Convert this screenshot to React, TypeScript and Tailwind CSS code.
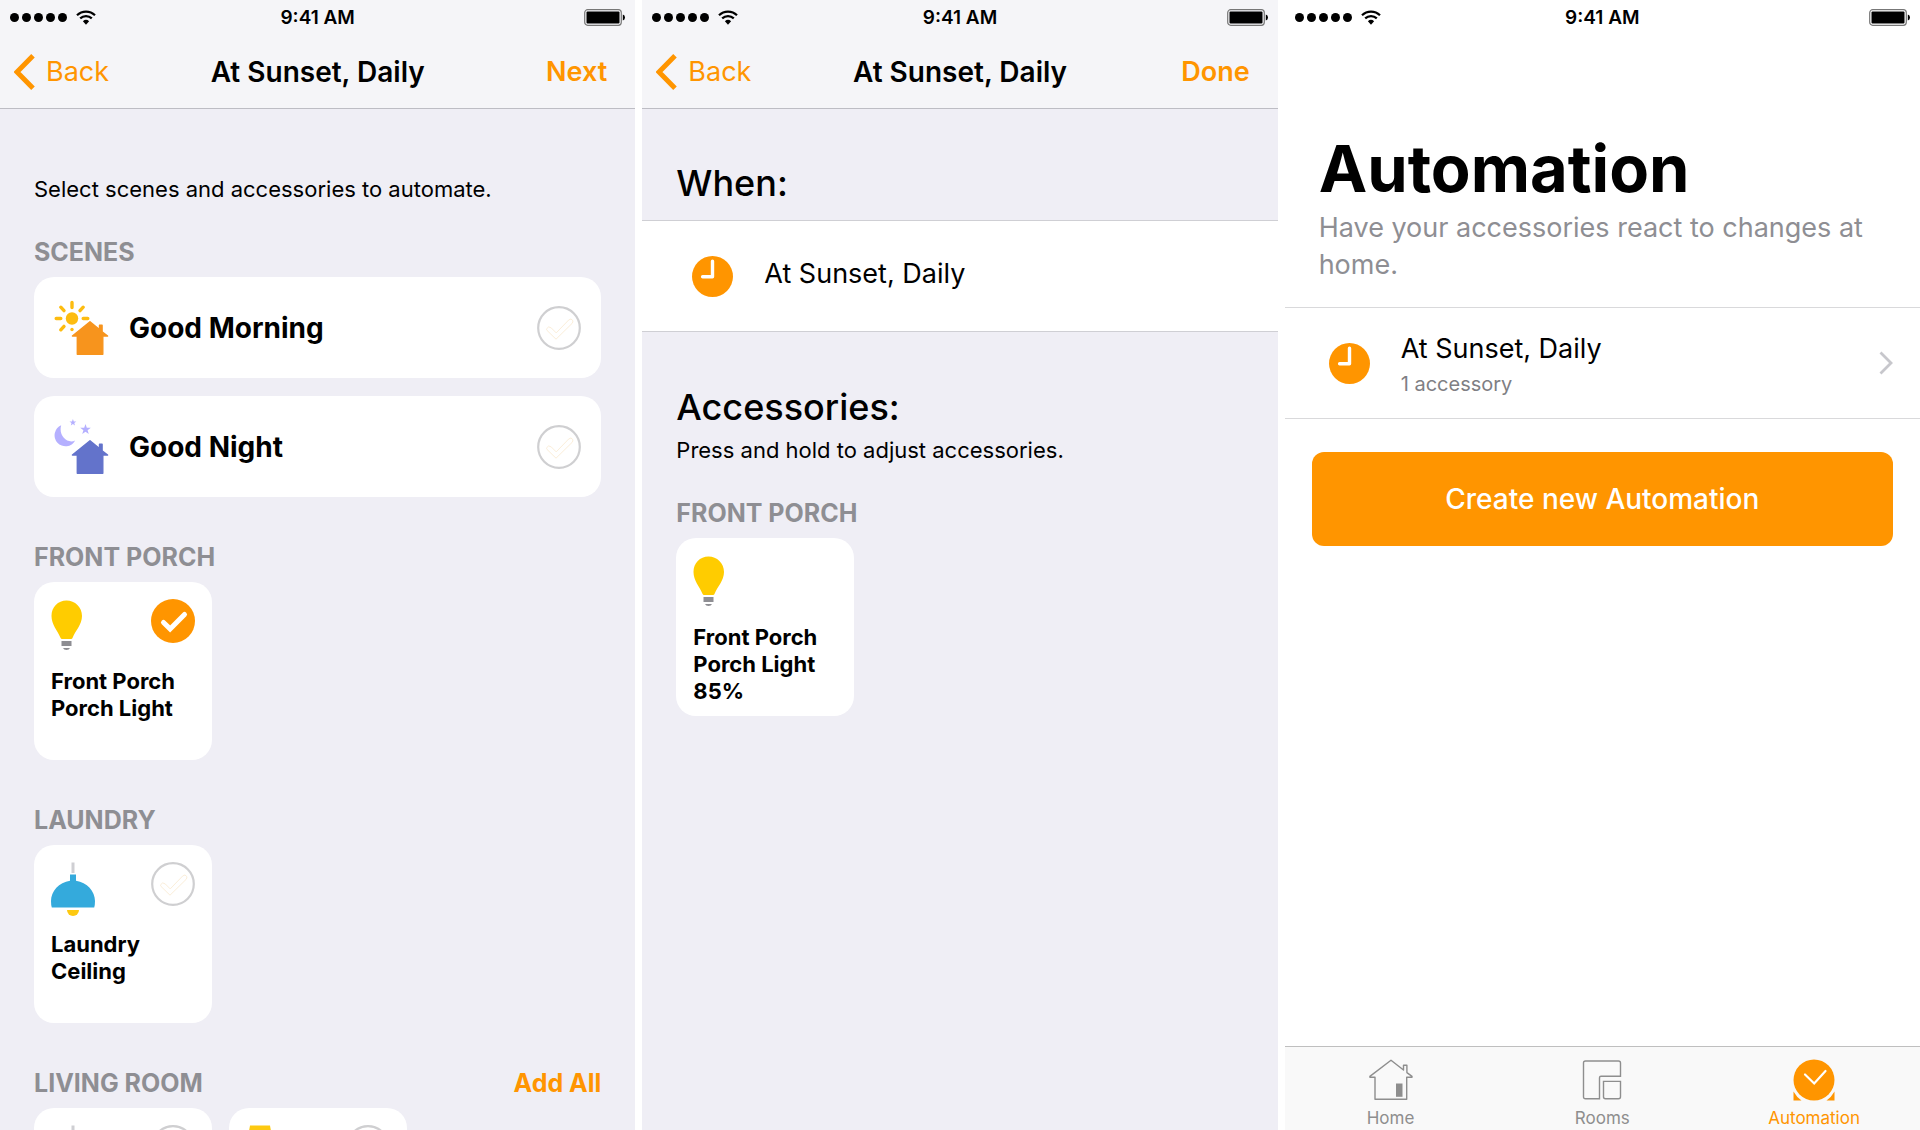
import { clsx } from "clsx";
import { useState } from "react";
import type { ReactNode } from "react";

type IconName = "bulb" | "pendant" | "lamp";

type Accessory = {
  id: string;
  icon: IconName;
  lines: string[];
  selected?: boolean;
};

type Room = {
  name: string;
  accessories: Accessory[];
  addAll?: boolean;
};

const rooms: Room[] = [
  {
    name: "FRONT PORCH",
    accessories: [
      { id: "porch-light", icon: "bulb", lines: ["Front Porch", "Porch Light"], selected: true },
    ],
  },
  {
    name: "LAUNDRY",
    accessories: [{ id: "laundry-ceiling", icon: "pendant", lines: ["Laundry", "Ceiling"] }],
  },
  {
    name: "LIVING ROOM",
    addAll: true,
    accessories: [
      { id: "living-ceiling", icon: "pendant", lines: [] },
      { id: "living-lamp", icon: "lamp", lines: [] },
    ],
  },
];

const HOUSE = "M36 21.7 45.5 29.6V25.2h2.600v6.600L53.600 36H48.800V54.200H23.300V36H18.400Z";

function SunHouseIcon() {
  return (
    <svg width="56" height="56" viewBox="0 0 56 56" aria-hidden="true">
      <circle cx="18" cy="18.5" r="6.2" fill="#fdbc10" />
      <path
        d="M18 2.5v5M2.2 18.5h4.6M29.2 18.5h4.6M6.8 7.2l3.2 3.4M29.2 7.2 26 10.6M6.8 29.8l3.2-3.4"
        stroke="#fdbc10"
        strokeWidth="3.4"
        strokeLinecap="round"
      />
      <circle cx="18" cy="29.5" r="1.7" fill="#fdbc10" />
      <path d={HOUSE} fill="#f7941d" stroke="#f7941d" strokeWidth="1.4" strokeLinejoin="round" />
    </svg>
  );
}

function MoonHouseIcon() {
  return (
    <svg width="56" height="56" viewBox="0 0 56 56" aria-hidden="true">
      <path d="M7.2 6.2A11 11 0 1 0 21.2 21.6C13 25.2 4.200 16.500 7.200 6.200Z" fill="#b5b0ff" />
      <path
        d="m18.900 0 .9 2.400h2.500l-2 1.600.7 2.500-2.100-1.500-2.100 1.500.7-2.500-2-1.600H18ZM31.500 5l1.300 3.800h4l-3.200 2.400 1.200 3.800-3.300-2.300-3.300 2.300 1.200-3.800-3.200-2.400h4Z"
        fill="#b5b0ff"
      />
      <path d={HOUSE} fill="#6373cb" stroke="#6373cb" strokeWidth="1.4" strokeLinejoin="round" />
    </svg>
  );
}

function AccessoryIcon({ name }: { name: IconName }) {
  if (name === "bulb") {
    return (
      <svg width="32" height="54" viewBox="0 0 32 54" aria-hidden="true">
        <path
          d="M15.500 1.500C24 1.500 31 8 31 17c0 8.500-6.500 14.500-9.500 22q-.4 1-1.400 1H11q-1 0-1.400-1C6.500 31.500.5 25.500.5 17 .5 8 7 1.500 15.500 1.500Z"
          fill="#ffcc00"
        />
        <path d="M10.500 42h10v5h-10ZM12 49h7q-.8 2-3.500 2T12 49Z" fill="#8e8e93" />
      </svg>
    );
  }
  if (name === "pendant") {
    return (
      <svg width="44" height="54" viewBox="0 0 44 54" aria-hidden="true">
        <path d="M20.500.5h3V11h-3Z" fill="#cfcfd3" />
        <path
          d="M19 12.500h6v6.200C36 20.500 44 29 44 39q0 4-.8 6.500H.8Q0 43 0 39C0 29 8 20.500 19 18.700Z"
          fill="#34aadc"
        />
        <path d="M16 48h12a6 6 0 0 1-12 0Z" fill="#fdc911" />
      </svg>
    );
  }
  return (
    <svg width="32" height="54" viewBox="0 0 32 54" aria-hidden="true">
      <path d="M4 .5h20L28 22H0Z" fill="#fdc911" />
      <path d="M12.500 24h3v26h7v3h-17v-3h7Z" fill="#8e8e93" />
    </svg>
  );
}

function CheckCircle({ checked }: { checked: boolean }) {
  if (checked) {
    return (
      <svg width="44" height="44" viewBox="0 0 44 44" className="shrink-0" aria-hidden="true">
        <circle cx="22" cy="22" r="22" fill="#ff9500" />
        <path
          d="m12.500 23.500 6.600 6.400L33.500 15.500"
          fill="none"
          stroke="#fff"
          strokeWidth="5"
          strokeLinecap="round"
        />
      </svg>
    );
  }
  return (
    <svg width="44" height="44" viewBox="0 0 44 44" className="shrink-0" fill="none" aria-hidden="true">
      <circle cx="22" cy="22" r="20.800" stroke="#cfcfd1" strokeWidth="2.200" />
      <path
        d="M9.600 22.800q1.800-3.400 4.600-.9l5 5 12.600-13q2.400-2 3.800.4.800 1.600-.6 3.200L19 33.200 10 24.400Q9.300 23.600 9.600 22.800Z"
        stroke="#fbeed9"
        strokeWidth="1"
      />
    </svg>
  );
}

function ClockIcon() {
  return (
    <svg width="41" height="41" viewBox="0 0 41 41" className="shrink-0" aria-hidden="true">
      <circle cx="20.500" cy="20.500" r="20.500" fill="#ff9500" />
      <path
        d="M20.500 5.200v15.600H10.600"
        fill="none"
        stroke="#fff"
        strokeWidth="3.400"
        strokeLinecap="round"
        strokeLinejoin="round"
      />
    </svg>
  );
}

function StatusBar() {
  return (
    <div className="grid h-[35px] grid-cols-3 items-center px-2.5">
      <div className="flex items-center gap-[9px]">
        <div className="flex gap-[3px]">
          {[0, 1, 2, 3, 4].map((dot) => (
            <span key={dot} className="size-[9px] rounded-full bg-black" />
          ))}
        </div>
        <svg width="20" height="15" viewBox="0 0 20 15" fill="none" aria-hidden="true">
          <path
            d="M1 5.200a12.900 12.900 0 0 1 18 0M4.200 8.400a8.300 8.300 0 0 1 11.600 0"
            stroke="#000"
            strokeWidth="2.200"
          />
          <path d="M6.900 11.300a4.500 4.500 0 0 1 6.200 0L10 14.800Z" fill="#000" />
        </svg>
      </div>
      <span className="text-center text-[19px] leading-6 font-semibold">9:41 AM</span>
      <svg width="41" height="17" viewBox="0 0 41 17" className="justify-self-end" aria-hidden="true">
        <rect x=".7" y=".7" width="36.600" height="15.600" rx="3" fill="none" stroke="#777" strokeWidth="1.200" />
        <rect x="2.500" y="2.500" width="33" height="12" rx="1" fill="#000" />
        <path d="M38.800 5.500q2.200.6 2.200 3t-2.200 3Z" fill="#000" />
      </svg>
    </div>
  );
}

function NavBar({ title, action }: { title: string; action: string }) {
  return (
    <header className="border-b border-[#bdbdc4] bg-[#f5f5f8]">
      <StatusBar />
      <div className="grid h-[73px] grid-cols-[1fr_auto_1fr] items-center px-3.5 leading-[34px]">
        <button type="button" className="flex items-center gap-[11px] text-[27px] text-[#ff9500]">
          <svg width="21" height="36" viewBox="0 0 21 36" fill="none" aria-hidden="true">
            <path d="M19 1.800 3 18l16 16.200" stroke="currentColor" strokeWidth="5" />
          </svg>
          Back
        </button>
        <h2 className="text-[28px] font-semibold">{title}</h2>
        <button
          type="button"
          className="justify-self-end pr-3.5 text-[27px] font-semibold text-[#ff9500]"
        >
          {action}
        </button>
      </div>
    </header>
  );
}

function SectionLabel({ children }: { children: ReactNode }) {
  return <h3 className="text-[25px] leading-[30px] font-bold text-[#8e8e93]">{children}</h3>;
}

function SceneCard({ icon, name }: { icon: ReactNode; name: string }) {
  const [checked, setChecked] = useState(false);
  return (
    <label className="flex h-[101px] cursor-pointer items-center gap-[19px] rounded-[20px] bg-white px-5">
      <input
        type="checkbox"
        className="sr-only"
        checked={checked}
        onChange={(e) => setChecked(e.target.checked)}
      />
      {icon}
      <span className="flex-1 text-[28px] leading-[34px] font-bold">{name}</span>
      <CheckCircle checked={checked} />
    </label>
  );
}

function CardBody({ icon, lines, corner }: { icon: IconName; lines: string[]; corner?: ReactNode }) {
  return (
    <>
      <span className="flex items-start justify-between">
        <AccessoryIcon name={icon} />
        {corner}
      </span>
      <span className="mt-[15px] block text-[22px] leading-[27px] font-bold">
        {lines.map((line) => (
          <span key={line} className="block whitespace-nowrap">
            {line}
          </span>
        ))}
      </span>
    </>
  );
}

function AccessoryCard({ accessory }: { accessory: Accessory }) {
  const [checked, setChecked] = useState(Boolean(accessory.selected));
  return (
    <label className="size-[178px] shrink-0 cursor-pointer rounded-[20px] bg-white p-[17px]">
      <input
        type="checkbox"
        className="sr-only"
        checked={checked}
        onChange={(e) => setChecked(e.target.checked)}
      />
      <CardBody
        icon={accessory.icon}
        lines={accessory.lines}
        corner={<CheckCircle checked={checked} />}
      />
    </label>
  );
}

function SelectScreen() {
  return (
    <section className="relative overflow-hidden bg-[#efeef5]">
      <NavBar title="At Sunset, Daily" action="Next" />
      <div className="px-[34px] pt-[65px]">
        <p className="text-[22px] leading-[30px]">Select scenes and accessories to automate.</p>
        <div className="mt-[33px] grid gap-2.5">
          <SectionLabel>SCENES</SectionLabel>
          <div className="grid gap-[18px]">
            <SceneCard icon={<SunHouseIcon />} name="Good Morning" />
            <SceneCard icon={<MoonHouseIcon />} name="Good Night" />
          </div>
        </div>
        {rooms.map((room) => (
          <div key={room.name} className="mt-[45px] grid gap-2.5">
            <div className="flex items-center justify-between">
              <SectionLabel>{room.name}</SectionLabel>
              {room.addAll ? (
                <button type="button" className="text-[25px] leading-[30px] font-bold text-[#ff9500]">
                  Add All
                </button>
              ) : null}
            </div>
            <div className="flex gap-[17px]">
              {room.accessories.map((accessory) => (
                <AccessoryCard key={accessory.id} accessory={accessory} />
              ))}
            </div>
          </div>
        ))}
      </div>
    </section>
  );
}

function ReviewScreen() {
  return (
    <section className="overflow-hidden bg-[#efeef5]">
      <NavBar title="At Sunset, Daily" action="Done" />
      <h3 className="px-[34px] pt-[52px] pb-[15px] text-[36px] leading-[44px] font-medium">When:</h3>
      <div className="flex h-28 items-center gap-[31px] border-y border-[#cfcfd4] bg-white pl-[50px]">
        <ClockIcon />
        <span className="pb-1 text-[27px] leading-[34px]">At Sunset, Daily</span>
      </div>
      <div className="px-[34px] pt-[53px]">
        <h3 className="text-[36px] leading-[44px] font-medium">Accessories:</h3>
        <p className="mt-1.5 text-[22px] leading-[30px]">Press and hold to adjust accessories.</p>
        <div className="mt-[33px] grid gap-2.5">
          <SectionLabel>FRONT PORCH</SectionLabel>
          <button
            type="button"
            className="flex size-[178px] flex-col rounded-[20px] bg-white p-[17px] text-left"
          >
            <CardBody icon="bulb" lines={["Front Porch", "Porch Light", "85%"]} />
          </button>
        </div>
      </div>
    </section>
  );
}

function HomeTabIcon() {
  return (
    <svg width="44" height="42" viewBox="0 0 44 42" fill="none" aria-hidden="true">
      <path
        d="M22 1.200 34.500 11V6.200h3.400v7.400L43 17.400v.9h-5.300v22H6v-22H.9v-.9Z"
        stroke="#8e8e8e"
        strokeWidth="1.400"
        strokeLinejoin="round"
      />
      <path d="M27 24.500h6.500v13.300H27Z" fill="#8e8e8e" />
    </svg>
  );
}

function RoomsTabIcon() {
  return (
    <svg width="40" height="42" viewBox="0 0 40 42" fill="none" stroke="#8e8e8e" strokeWidth="1.400" aria-hidden="true">
      <path d="M3.500 2H36.500q2 0 2 2V17.300H19q-1.500 0-1.500 1.500V39.700H3.500q-2 0-2-2V4q0-2 2-2Z" />
      <path d="M21.500 22.400h17v15.300q0 2-2 2H23.500q-2 0-2-2Z" />
    </svg>
  );
}

function AutomationTabIcon() {
  return (
    <svg width="42" height="42" viewBox="0 0 42 42" fill="none" aria-hidden="true">
      <circle cx="21" cy="21" r="20.500" fill="#ff9500" />
      <path d="M.5 32.500q3 5.500 8 9H.5ZM41.500 32.500q-3 5.500-8 9h8Z" fill="#ff9500" />
      <path
        d="m12 15.500 9.200 9L32.500 12"
        stroke="#fff"
        strokeWidth="2.200"
        strokeLinecap="round"
      />
    </svg>
  );
}

const tabs = [
  { label: "Home", icon: <HomeTabIcon />, active: false },
  { label: "Rooms", icon: <RoomsTabIcon />, active: false },
  { label: "Automation", icon: <AutomationTabIcon />, active: true },
];

function AutomationScreen() {
  return (
    <section className="flex flex-col overflow-hidden bg-white">
      <StatusBar />
      <div className="pt-[94px] pr-6 pb-6 pl-[34px]">
        <h1 className="text-[65px] leading-[80px] font-bold">Automation</h1>
        <p className="text-[27px] leading-[37px] text-[#8e8e93]">
          Have your accessories react to changes at home.
        </p>
      </div>
      <a
        href="#at-sunset"
        className="flex h-28 items-center border-y border-[#d9d9db] pr-[27px] pl-11"
      >
        <ClockIcon />
        <span className="ml-[31px] grid flex-1 gap-[5px]">
          <span className="text-[27px] leading-9">At Sunset, Daily</span>
          <span className="text-[20px] leading-6 text-[#7f7f84]">1 accessory</span>
        </span>
        <svg width="14" height="24" viewBox="0 0 14 24" fill="none" aria-hidden="true">
          <path d="m1.500 1.500 10.500 10.500L1.500 22.500" stroke="#c7c7cc" strokeWidth="2.800" />
        </svg>
      </a>
      <button
        type="button"
        className="mx-[27px] mt-[33px] h-[94px] rounded-xl bg-[#ff9500] text-[28px] leading-[34px] font-medium text-white"
      >
        Create new Automation
      </button>
      <nav
        className="mt-auto grid h-[84px] grid-cols-3 items-start border-t border-[#bfbfbf] bg-[#f9f9f9] pt-3"
        aria-label="Tabs"
      >
        {tabs.map((tab) => (
          <a
            key={tab.label}
            href={`#${tab.label.toLowerCase()}`}
            aria-current={tab.active ? "page" : undefined}
            className={clsx(
              "flex flex-col items-center gap-[7px] text-[17px] leading-5",
              tab.active ? "text-[#ff9500]" : "text-[#8e8e8e]",
            )}
          >
            {tab.icon}
            {tab.label}
          </a>
        ))}
      </nav>
    </section>
  );
}

export default function App() {
  return (
    <main className="grid h-screen grid-cols-3 grid-rows-1 gap-[7px] overflow-hidden bg-white font-['Inter',sans-serif] text-black">
      <SelectScreen />
      <ReviewScreen />
      <AutomationScreen />
    </main>
  );
}
